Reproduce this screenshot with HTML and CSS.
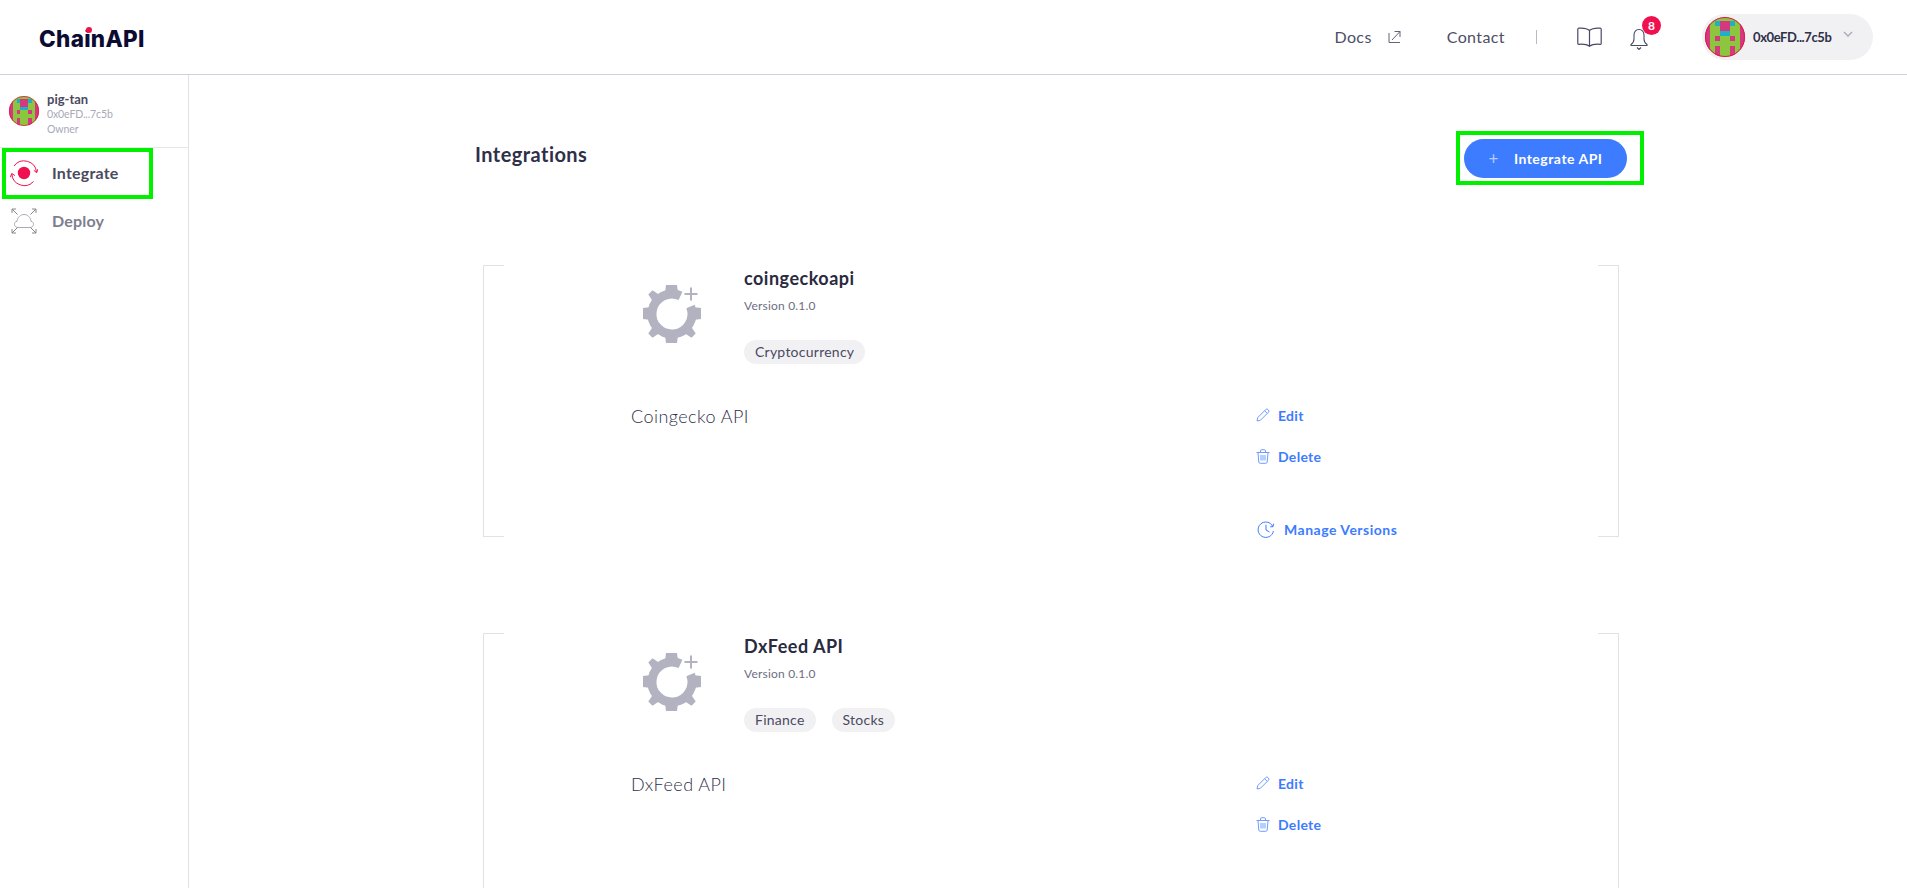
FILE: index.html
```html
<!DOCTYPE html>
<html lang="en">
<head>
<meta charset="utf-8">
<title>ChainAPI - Integrations</title>
<link rel="stylesheet" href="styles.css">
</head>
<body>
<svg class="defs" width="0" height="0" aria-hidden="true">
  <defs>
    <clipPath id="avatar-clip"><circle cx="20" cy="20" r="20"/></clipPath>
    <symbol id="avatar" viewBox="0 0 40 40">
      <g clip-path="url(#avatar-clip)" shape-rendering="crispEdges">
        <rect width="40" height="40" fill="#8cc63f"/>
        <rect x="0" width="5" height="40" fill="#d4387f"/>
        <rect x="35" width="5" height="40" fill="#d4387f"/>
        <rect x="10" y="4" width="5" height="5" fill="#1eb0c8"/>
        <rect x="25" y="4" width="5" height="5" fill="#1eb0c8"/>
        <rect x="15" y="4" width="10" height="10" fill="#d4387f"/>
        <rect x="15" y="14" width="10" height="5" fill="#1eb0c8"/>
        <rect x="10" y="19" width="5" height="5" fill="#d4387f"/>
        <rect x="25" y="19" width="5" height="5" fill="#d4387f"/>
        <rect x="10" y="29" width="5" height="11" fill="#d4387f"/>
        <rect x="25" y="29" width="5" height="11" fill="#d4387f"/>
      </g>
      <circle cx="20" cy="20" r="19.5" fill="none" stroke="#f0104f" stroke-width="1"/>
    </symbol>
    <symbol id="gear" viewBox="0 0 58 58">
      <g fill="#b2b2c0">
        <path d="M23 0h11l1 8H22z"/>
        <path d="M23 58h11l1-8H22z"/>
        <path d="M0 23v11l8 1V22z"/>
        <path d="M58 23v11l-8 1V22z"/>
        <path d="M9.500 5.300l-4.200 4.200 5 7.500 6.700-6.700z"/>
        <path d="M9.500 52.700l-4.200-4.200 5-7.500 6.700 6.700z"/>
        <path d="M48.500 52.700l4.200-4.200-5-7.500-6.700 6.700z"/>
      </g>
      <path d="M47.500 21.500A20 20 0 1 1 37.500 10.900" fill="none" stroke="#b2b2c0" stroke-width="9"/>
      <path d="M48 2.500v13M41.500 9h13" fill="none" stroke="#b2b2c0" stroke-width="2"/>
    </symbol>
    <symbol id="pencil" viewBox="0 0 14 14">
      <path d="M1 13l.8-3.500L9.800 1.500a1.500 1.500 0 0 1 2.100 0l.6.600a1.500 1.500 0 0 1 0 2.100L4.500 12.200z M8.600 2.700l2.700 2.700" fill="none" stroke="#6e9dff" stroke-width="1"/>
    </symbol>
    <symbol id="trash" viewBox="0 0 14 15">
      <path d="M.5 3.500h13M2 3.500l.8 9.500a1.500 1.500 0 0 0 1.500 1.300h5.400a1.500 1.500 0 0 0 1.500-1.300l.8-9.500M4.500 3.500V2A1.300 1.300 0 0 1 5.800.7h2.400A1.300 1.300 0 0 1 9.500 2v1.500M5 6v5.500M7 6v5.500M9 6v5.500" fill="none" stroke="#6e9dff" stroke-width="1"/>
    </symbol>
    <symbol id="clock" viewBox="0 0 18 17">
      <path d="M15.800 5.500A7.700 7.700 0 1 0 16.400 10M9 3.800V9l3.500 2M13.200 5.800l2.800-.1.500-3" fill="none" stroke="#3d7bff" stroke-width="1"/>
    </symbol>
  </defs>
</svg>

<header class="topbar">
  <a class="logo"><span class="logo-dot"></span>ChainAPI</a>
  <nav class="topnav">
    <a class="topnav-docs">Docs</a>
    <svg class="icon-external" width="13" height="14" viewBox="0 0 13 14"><path d="M1 3v9.500h11M4 10l8-8.500M6.500 1.500H12v5.500" fill="none" stroke="#62627a" stroke-width="1"/></svg>
    <a class="topnav-contact">Contact</a>
    <span class="topnav-divider"></span>
    <svg class="icon-book" width="25" height="20" viewBox="0 0 25 20"><path d="M12.500 3.500C10 1.300 6 .8 1.500 1.200A1 1 0 0 0 .8 2v14.500a.8.800 0 0 0 .8.800c4.500-.4 8.400 0 10.900 2 2.500-2 6.400-2.400 10.900-2a.8.800 0 0 0 .8-.8V2a1 1 0 0 0-.7-.8C19 .8 15 1.300 12.500 3.500zm0 0v15.500" fill="none" stroke="#4a4a68" stroke-width="1.200"/></svg>
    <div class="bell">
      <svg width="18" height="22" viewBox="0 0 18 22"><path d="M9 1.500c-3.200 0-5 2.400-5 5.500v4c0 2.500-1 4-3 5.500v1h16v-1c-2-1.500-3-3-3-5.500V7c0-3.100-1.800-5.500-5-5.500zM7 19.500l2 2 2-2" fill="none" stroke="#4a4a68" stroke-width="1.100"/></svg>
      <span class="badge">8</span>
    </div>
    <div class="account">
      <svg class="account-avatar" width="40" height="40"><use href="#avatar"/></svg>
      <span class="account-address">0x0eFD...7c5b</span>
      <svg class="chevron" width="10" height="6" viewBox="0 0 10 6"><path d="M1 1l4 4 4-4" fill="none" stroke="#aeaeba" stroke-width="1.500"/></svg>
    </div>
  </nav>
</header>

<div class="layout">
  <aside class="sidebar">
    <div class="profile">
      <svg width="30" height="30"><use href="#avatar"/></svg>
      <div class="profile-text">
        <div class="profile-name">pig-tan</div>
        <div class="profile-meta">0x0eFD...7c5b</div>
        <div class="profile-meta">Owner</div>
      </div>
    </div>
    <a class="nav-item nav-item-active">
      <svg width="28" height="28" viewBox="0 0 28 28"><circle cx="14" cy="14" r="6.200" fill="#f0104f"/><path d="M4 7A12.500 12.500 0 0 1 26.500 13M23.800 11.300l2.900 2.400 1.100-3.500M1.800 15A12.500 12.500 0 0 0 23.500 22.500M.4 18.200l1.300-3.700 3.200 2" fill="none" stroke="#f0104f" stroke-width="1"/></svg>
      <span>Integrate</span>
    </a>
    <a class="nav-item nav-item-muted">
      <svg width="28" height="28" viewBox="0 0 28 28"><path d="M8 20.500c-4 0-5-5.500-1-6.200C7.500 9.800 11 7.500 14 7.500c3.500 0 6.500 2.500 7 6.800 3.800.8 3 6.200-1 6.200z" fill="none" stroke="#a9a9b6" stroke-width="1"/><path d="M7.500 7.500L2 2M2 6V2h4M20.500 7.500L26 2M22 2h4v4M7.500 20.500L2 26M2 22v4h4M20.500 20.500L26 26M26 22v4h-4" fill="none" stroke="#85858f" stroke-width="1"/></svg>
      <span>Deploy</span>
    </a>
  </aside>

  <main class="main">
    <div class="main-head">
      <h1 class="page-title">Integrations</h1>
      <div class="cta-box">
        <button class="cta"><span class="cta-plus">+</span>Integrate API</button>
      </div>
    </div>

    <section class="card">
      <div class="card-top">
        <svg class="card-logo" width="58" height="58"><use href="#gear"/></svg>
        <div>
          <h2 class="card-name">coingeckoapi</h2>
          <div class="card-version">Version 0.1.0</div>
          <div class="tags"><span class="tag">Cryptocurrency</span></div>
        </div>
      </div>
      <div class="card-body">
        <p class="card-desc">Coingecko API</p>
        <div class="actions">
          <a class="action"><svg width="14" height="14"><use href="#pencil"/></svg>Edit</a>
          <a class="action"><svg width="14" height="15"><use href="#trash"/></svg>Delete</a>
          <a class="action action-versions"><svg width="18" height="17"><use href="#clock"/></svg>Manage Versions</a>
        </div>
      </div>
    </section>

    <section class="card">
      <div class="card-top">
        <svg class="card-logo" width="58" height="58"><use href="#gear"/></svg>
        <div>
          <h2 class="card-name">DxFeed API</h2>
          <div class="card-version">Version 0.1.0</div>
          <div class="tags"><span class="tag">Finance</span><span class="tag">Stocks</span></div>
        </div>
      </div>
      <div class="card-body">
        <p class="card-desc">DxFeed API</p>
        <div class="actions">
          <a class="action"><svg width="14" height="14"><use href="#pencil"/></svg>Edit</a>
          <a class="action"><svg width="14" height="15"><use href="#trash"/></svg>Delete</a>
        </div>
      </div>
    </section>
  </main>
</div>
</body>
</html>
```

FILE: styles.css
```css
* { box-sizing: border-box; }
html, body { height: 100%; }
body {
  margin: 0;
  height: 888px;
  overflow: hidden;
  background: #fff;
  color: #2f2f48;
  font-family: "Lato", "Open Sans", sans-serif;
}
.defs { position: absolute; }
h1, h2, p { margin: 0; }

.topbar {
  height: 75px;
  border-bottom: 1px solid #cfcfdb;
  display: flex;
  align-items: center;
  justify-content: space-between;
  padding: 0 34px 0 39px;
}
.logo {
  position: relative;
  font-family: "Inter", sans-serif;
  font-weight: 800;
  font-size: 22.5px;
  letter-spacing: 0.3px;
  color: #0c0c33;
  line-height: 24px;
  margin-top: 3px;
}
.logo-dot {
  position: absolute;
  left: 47px;
  top: 0;
  width: 6px;
  height: 6px;
  border-radius: 50%;
  background: #f0104f;
}
.topnav { display: flex; align-items: center; color: #4e4e66; font-size: 16px; }
.topnav-docs { margin-right: 16px; margin-bottom: 2px; letter-spacing: 0.4px; }
.icon-external { margin-right: 46px; }
.topnav-contact { margin-bottom: 2px; letter-spacing: 0.4px; }
.topnav-divider { width: 1px; height: 14px; background: #b9b9c6; margin: 0 40px 0 31px; }
.bell { position: relative; margin-left: 28px; margin-right: 54px; width: 18px; height: 22px; margin-top: 4px; }
.bell svg { display: block; }
.badge {
  position: absolute;
  left: 12px;
  top: -12px;
  width: 19px;
  height: 19px;
  border-radius: 50%;
  background: #f0104f;
  color: #fff;
  font-size: 12px;
  font-weight: 700;
  line-height: 19px;
  text-align: center;
}
.account {
  width: 171px;
  height: 46px;
  border-radius: 23px;
  background: #f1f1f4;
  display: flex;
  align-items: center;
  padding-left: 3px;
}
.account-address { margin-left: 8px; font-size: 13px; font-weight: 700; color: #2f2f48; letter-spacing: -0.4px; }
.chevron { margin-left: 12px; margin-bottom: 6px; }

.layout { display: flex; height: 813px; }
.sidebar { width: 189px; flex: none; border-right: 1px solid #e1e1e7; }
.profile {
  height: 73px;
  border-bottom: 1px solid #e6e6ec;
  display: flex;
  align-items: flex-start;
  gap: 8px;
  padding: 21px 0 0 9px;
}
.profile-text { margin-top: -4px; }
.profile-name { font-size: 13px; font-weight: 700; color: #4a4a60; line-height: 15px; }
.profile-meta { font-size: 10.5px; color: #a9a9b8; line-height: 15px; letter-spacing: -0.1px; }
.nav-item {
  display: flex;
  align-items: center;
  gap: 14px;
  width: 151px;
  height: 51px;
  margin-left: 2px;
  padding-left: 4px;
  padding-bottom: 2px;
  font-size: 16px;
  font-weight: 700;
  border: 4px solid transparent;
  letter-spacing: 0.2px;
}
.nav-item-active { color: #4a4a60; border-color: #00f000; }
.nav-item-muted { color: #7e7e8e; margin-top: -3px; }

.main { flex: 1; padding: 56px 263px 0 286px; overflow: hidden; }
.main-head { display: flex; justify-content: space-between; align-items: flex-start; height: 54px; }
.page-title { font-size: 20px; font-weight: 700; line-height: 24px; margin-top: 11px; color: #2f2f48; letter-spacing: 0.45px; }
.cta-box { border: 4px solid #00f000; padding: 4px 13px 3px 4px; height: 54px; }
.cta {
  display: flex;
  align-items: center;
  justify-content: center;
  width: 163px;
  height: 39px;
  border: 0;
  border-radius: 20px;
  background: #3d7bff;
  color: #fff;
  font-family: inherit;
  font-size: 14px;
  font-weight: 700;
  letter-spacing: 0.5px;
}
.cta-plus { font-weight: 400; font-size: 17px; color: #b4ccff; margin-right: 15px; line-height: 1; }

.card {
  width: 1136px;
  height: 272px;
  margin: 80px 0 96px 8px;
  border-left: 1px solid #e1e1e7;
  border-right: 1px solid #e1e1e7;
  background:
    linear-gradient(#e1e1e7, #e1e1e7) left top / 20px 1px no-repeat,
    linear-gradient(#e1e1e7, #e1e1e7) right top / 20px 1px no-repeat,
    linear-gradient(#e1e1e7, #e1e1e7) left bottom / 20px 1px no-repeat,
    linear-gradient(#e1e1e7, #e1e1e7) right bottom / 20px 1px no-repeat;
  padding-top: 1px;
}
.card + .card { margin-top: 0; }
.card-top { display: flex; padding-left: 159px; }
.card-logo { margin-top: 19px; margin-right: 43px; flex: none; }
.card-name { font-size: 18px; font-weight: 700; line-height: 24px; color: #2a2a40; letter-spacing: 0.5px; }
.card-version { font-size: 12px; line-height: 16px; margin-top: 8px; color: #6e6e80; letter-spacing: 0.2px; }
.tags { display: flex; gap: 16px; margin-top: 26px; }
.tag {
  height: 24px;
  padding: 0 11px;
  border-radius: 12px;
  background: #f1f1f4;
  font-size: 14px;
  line-height: 24px;
  color: #4a4a60;
  letter-spacing: 0.25px;
}
.card-body { display: flex; padding-left: 147px; margin-top: 39px; }
.card-desc { width: 625px; flex: none; margin-top: 1px; font-size: 18px; font-weight: 300; line-height: 24px; color: #30304a; letter-spacing: 0.45px; }
.actions { display: flex; flex-direction: column; align-items: flex-start; gap: 17px; }
.action {
  display: flex;
  align-items: center;
  gap: 8px;
  height: 24px;
  font-size: 14px;
  font-weight: 700;
  color: #3d7bff;
  letter-spacing: 0.3px;
}
.action-versions { margin-top: 32px; margin-left: 1px; gap: 9px; letter-spacing: 0.5px; }
```
